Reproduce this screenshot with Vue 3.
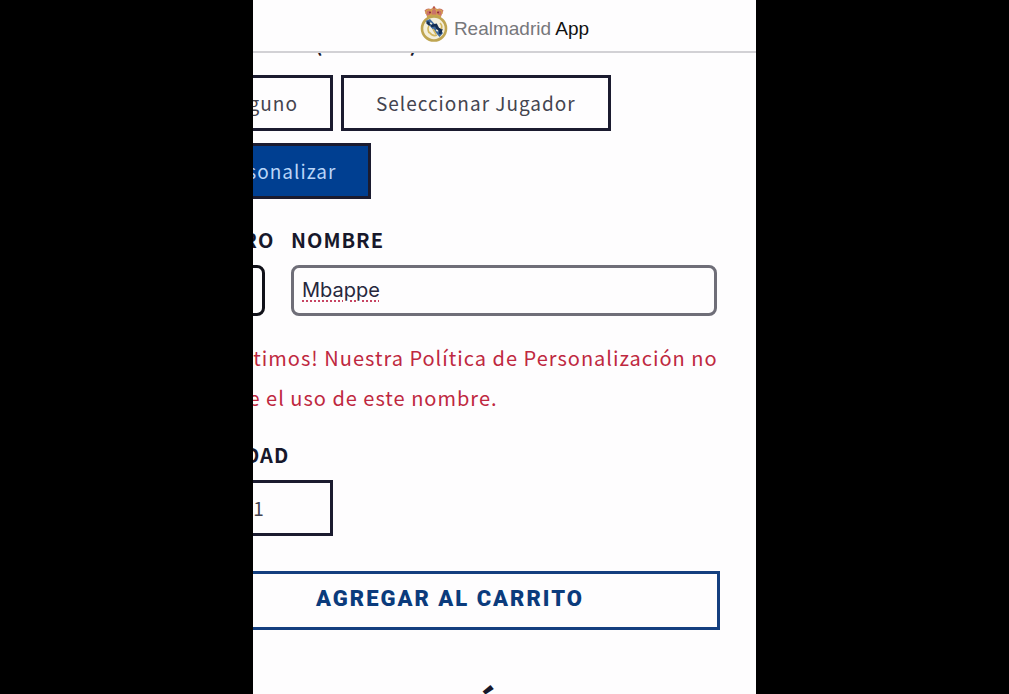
<script setup>
import { ref } from 'vue'

const options = [
  { id: 'none', label: 'Ninguno' },
  { id: 'player', label: 'Seleccionar Jugador' },
  { id: 'custom', label: 'Personalizar' },
]

const selected = ref('custom')
const number = ref('')
const name = ref('Mbappe')
const quantity = ref('1')
</script>

<template>
  <div class="stage">
    <div class="screen">
      <header class="topbar">
        <svg class="crest" viewBox="0 0 28 36" aria-hidden="true">
          <path d="M6 8 L4.500 4.500 Q7 1.500 11 3 Q14 0 17 3 Q21 1.500 23.500 4.500 L22 8 L20.500 12 H7.500 Z" fill="#c9736a" />
          <path d="M6 8 Q5 3 11 4 M22 8 Q23 3 17 4 M11 9 Q10 4 14 2 Q18 4 17 9" fill="none" stroke="#d9a64c" stroke-width="1.200" />
          <path d="M7 9.500 Q14 7.500 21 9.500 L20.500 12 Q14 10.500 7.500 12 Z" fill="#d4a548" />
          <circle cx="10" cy="6.500" r="1" fill="#8e2633" />
          <circle cx="18" cy="6.500" r="1" fill="#8e2633" />
          <circle cx="14" cy="1.500" r="1.200" fill="#b9554c" />
          <circle cx="14" cy="22.500" r="12" fill="#f4efdc" stroke="#bfa552" stroke-width="2.600" />
          <path d="M5.500 15 L10 13 L23 27 L19.500 31 Z" fill="#3c679b" />
          <path d="M7 16 L10 19 M11 20 L16 19 L18 23 L21 24 L20 28" fill="none" stroke="#142d52" stroke-width="2.800" />
          <path d="M9 27 Q7 22 9 20 M13 23 L16 28 M20 17 Q23 20 21 23 M9 26 Q13 31 17 29" fill="none" stroke="#d2b75f" stroke-width="1.600" />
          <path d="M10 17 L12 18 M16 24 L18 25" stroke="#e8e7d8" stroke-width="1.500" />
        </svg>
        <span class="brand">Realmadrid <b>App</b></span>
      </header>

      <main class="product">
        <h2 class="legend">ESTAMPADO (Nombre)</h2>

        <div class="options">
          <button
            v-for="option in options"
            :key="option.id"
            type="button"
            class="option"
            :class="{ active: selected === option.id }"
            @click="selected = option.id"
          >{{ option.label }}</button>
        </div>

        <div class="fields">
          <div class="field">
            <label class="label" for="number">NÚMERO</label>
            <input id="number" v-model="number" class="input dark" type="text" />
          </div>
          <div class="field">
            <label class="label" for="name">NOMBRE</label>
            <input id="name" v-model="name" class="input misspelled" type="text" spellcheck="false" />
          </div>
        </div>

        <p class="error">¡Lo sentimos! Nuestra Política de Personalización no permite el uso de este nombre.</p>

        <label class="label" for="quantity">CANTIDAD</label>
        <input id="quantity" v-model="quantity" class="quantity" type="text" inputmode="numeric" />

        <button type="button" class="add">AGREGAR AL CARRITO</button>

        <h2 class="more">CARACTERÍSTICAS</h2>
      </main>
    </div>
  </div>
</template>

<style>
body {
  margin: 0;
  background: #000;
}
</style>

<style scoped>
.stage {
  height: 100vh;
  padding: 0 253px;
  background: #000;
  overflow: hidden;
  font-family: "Noto Sans CJK JP", "Noto Sans", sans-serif;
}

.stage * {
  box-sizing: border-box;
}

.screen {
  height: 100%;
  background: #fefdfe;
  overflow: hidden;
}

.topbar {
  position: relative;
  z-index: 1;
  display: flex;
  align-items: center;
  justify-content: center;
  gap: 6px;
  height: 53px;
  padding-bottom: 3px;
  border-bottom: 2px solid #d2d1d5;
  background: #fefdfe;
}

.crest {
  width: 28px;
  height: 36px;
}

.brand {
  padding-top: 10px;
  font-family: "Liberation Sans", Arial, sans-serif;
  font-size: 19px;
  line-height: 24px;
  color: #77777b;
}

.brand b {
  font-weight: 400;
  color: #111;
}

.product {
  margin-left: -73px;
  padding-right: 36px;
}

.legend {
  margin: -23px 0 17px;
  font-size: 20px;
  line-height: 28px;
  letter-spacing: 1px;
  color: #17182b;
}

.options {
  display: flex;
  flex-wrap: wrap;
  gap: 12px 8px;
}

.option {
  height: 56px;
  padding: 0 32px 2px;
  border: 3px solid #1b1b2f;
  background: transparent;
  color: #44444f;
  font-family: inherit;
  font-size: 19px;
  letter-spacing: 1px;
}

.option.active {
  background: #003f91;
  color: #b9d5f8;
}

.fields {
  display: grid;
  grid-template-columns: 85px 1fr;
  gap: 26px;
  margin: 26px 3px 0 0;
}

.label {
  display: block;
  margin-bottom: 10px;
  font-size: 20px;
  font-weight: 700;
  line-height: 30px;
  letter-spacing: 1px;
  white-space: nowrap;
  color: #17182b;
}

.input {
  display: block;
  width: 100%;
  height: 51px;
  padding: 0 8px 2px;
  border: 3px solid #6f6e78;
  border-radius: 8px;
  background: transparent;
  color: #26273c;
  font-family: Inter, sans-serif;
  font-size: 20px;
  line-height: 32px;
}

.input.dark {
  border-color: #111119;
}

.misspelled {
  text-decoration: underline dotted #c74463 2px;
  text-underline-offset: 4px;
}

.error {
  margin: 22px 0;
  font-size: 20px;
  line-height: 40px;
  letter-spacing: 1px;
  color: #bf2840;
}

.quantity {
  display: block;
  width: 153px;
  height: 56px;
  padding: 0 0 2px 4px;
  border: 3px solid #1b1b2f;
  background: transparent;
  color: #44444f;
  font-family: inherit;
  font-size: 19px;
  text-align: center;
}

.add {
  display: block;
  width: 100%;
  height: 59px;
  margin-top: 35px;
  padding: 0 0 4px;
  border: 3px solid #143f7f;
  background: transparent;
  color: #0b3b7c;
  font-family: Roboto, sans-serif;
  font-size: 22px;
  font-weight: 900;
  letter-spacing: 2px;
}

.more {
  margin: 48px 0 0;
  font-size: 42px;
  line-height: 62px;
  letter-spacing: 1px;
  text-align: center;
  white-space: nowrap;
  color: #17182b;
}
</style>
